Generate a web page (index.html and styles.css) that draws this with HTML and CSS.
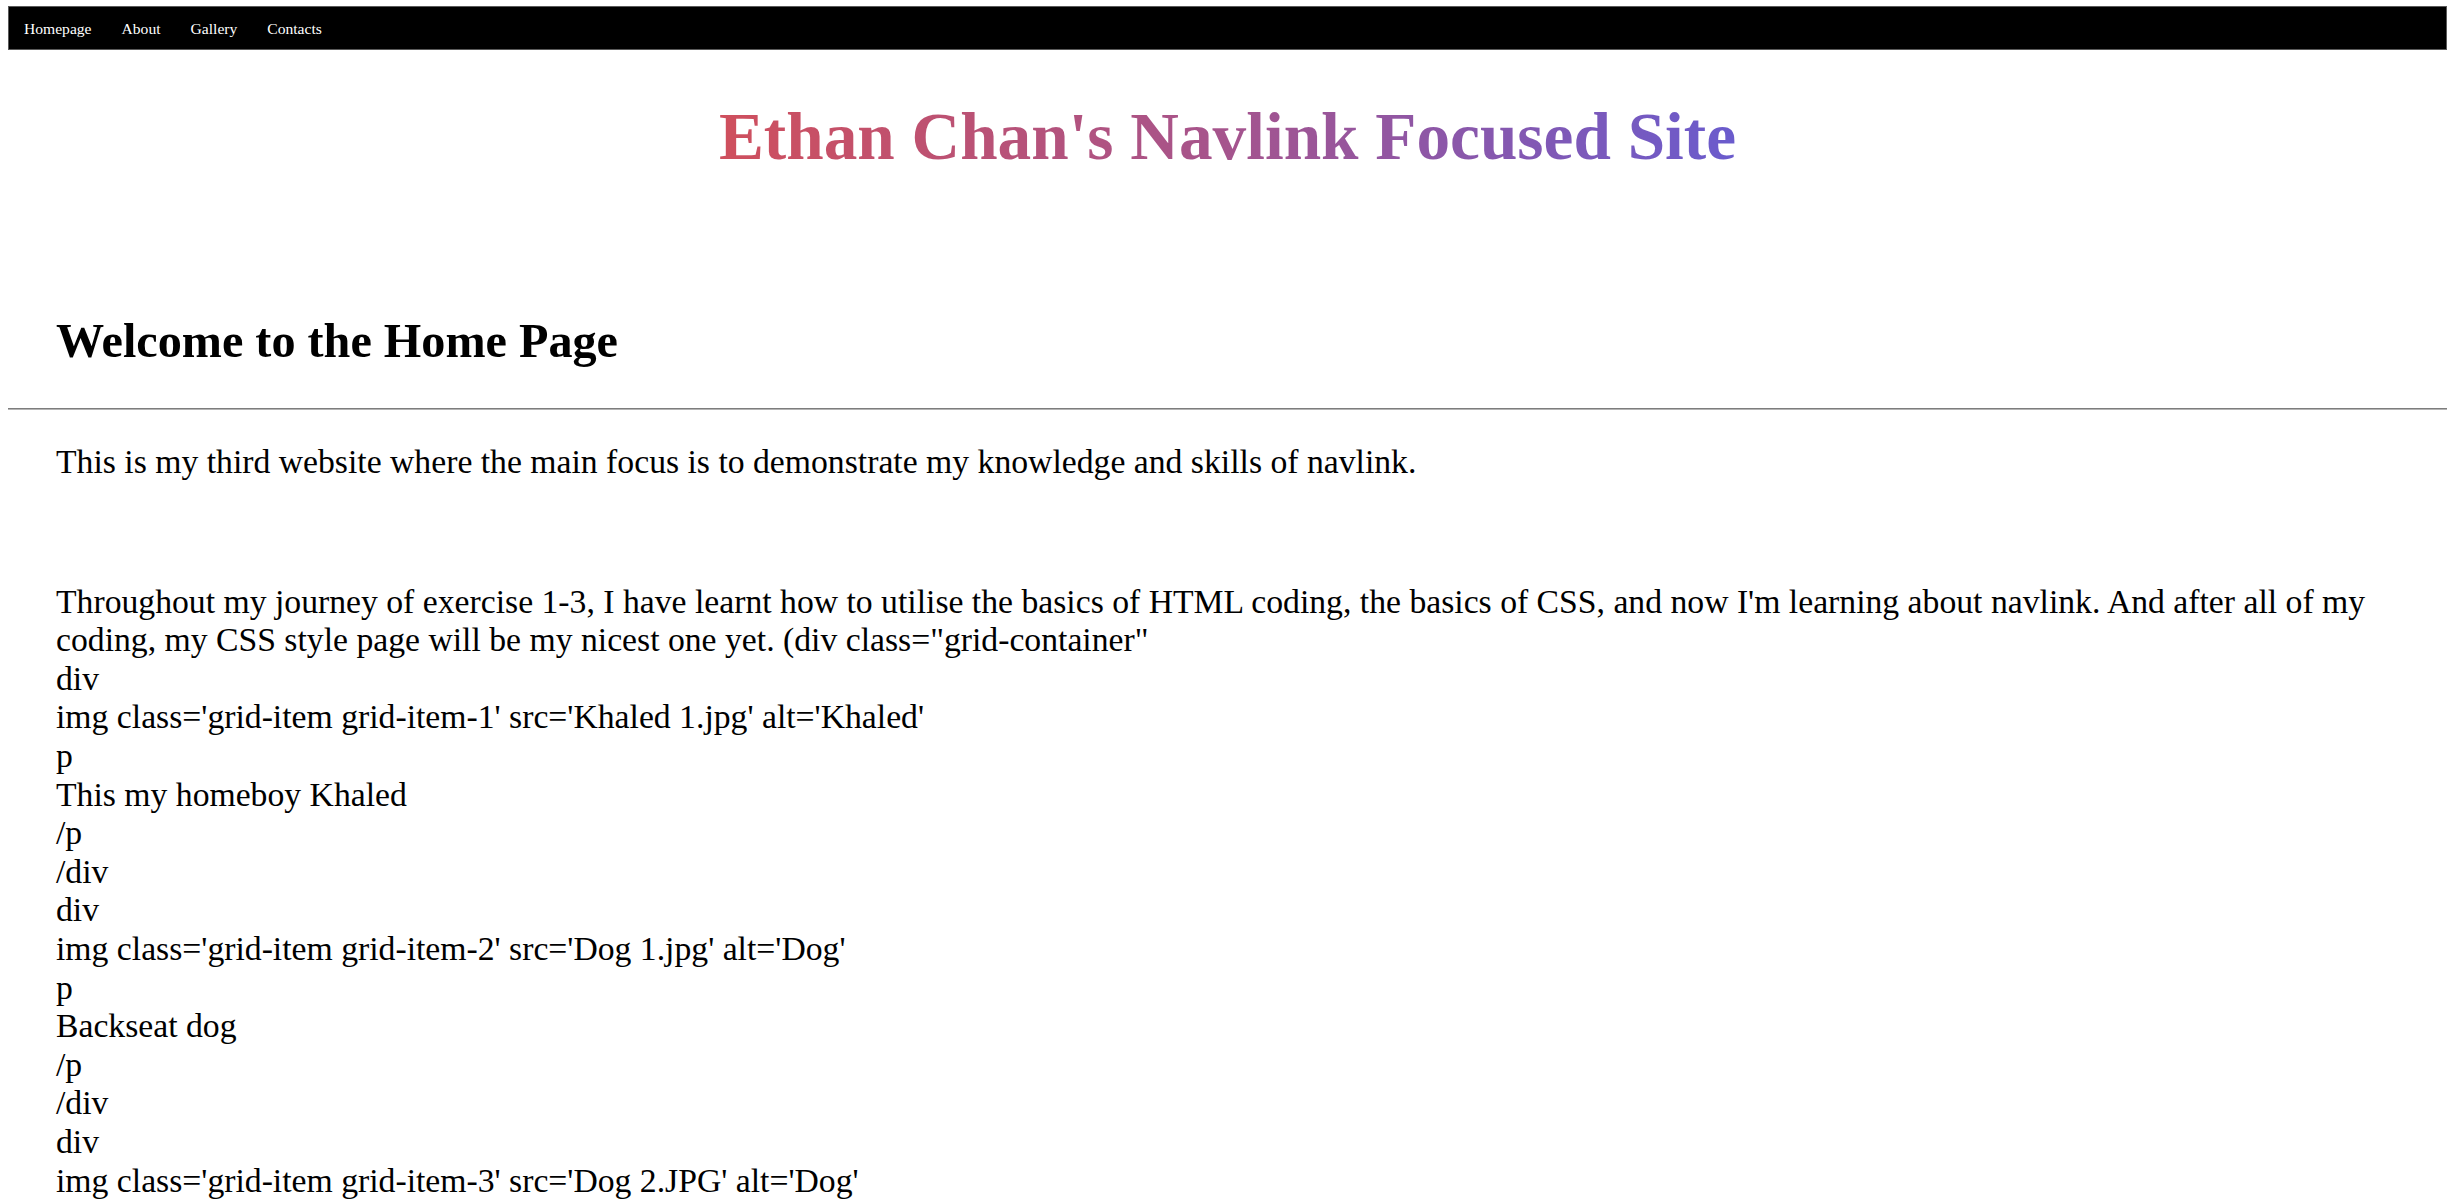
FILE: index.html
```html
<!DOCTYPE html>
<html lang="en">
<head>
<meta charset="utf-8">
<title>Ethan Chan's Navlink Focused Site</title>
<link rel="stylesheet" href="styles.css">
</head>
<body>
<nav class="topnav">
  <a class="navlink" href="#">Homepage</a>
  <a class="navlink" href="#">About</a>
  <a class="navlink" href="#">Gallery</a>
  <a class="navlink" href="#">Contacts</a>
</nav>
<header class="site-header">
  <h1 class="site-title">Ethan Chan's Navlink Focused Site</h1>
</header>
<section class="intro">
  <h2 class="page-heading">Welcome to the Home Page</h2>
</section>
<hr class="divider">
<main class="content">
  <p class="lead">This is my third website where the main focus is to demonstrate my knowledge and skills of navlink.</p>
  <p class="body-text">Throughout my journey of exercise 1-3, I have learnt how to utilise the basics of HTML coding, the basics of CSS, and now I'm learning about navlink. And after all of my coding, my CSS style page will be my nicest one yet. (div class="grid-container"
div
img class='grid-item grid-item-1' src='Khaled 1.jpg' alt='Khaled'
p
This my homeboy Khaled
/p
/div
div
img class='grid-item grid-item-2' src='Dog 1.jpg' alt='Dog'
p
Backseat dog
/p
/div
div
img class='grid-item grid-item-3' src='Dog 2.JPG' alt='Dog'</p>
</main>
</body>
</html>
```

FILE: styles.css
```css
html {
  background: #ffffff;
}

body {
  margin: 6px 8px 0 8px;
  font-family: "Liberation Serif", "Times New Roman", serif;
  color: #000000;
}

.topnav {
  display: flex;
  align-items: center;
  height: 44px;
  box-sizing: border-box;
  background: #000000;
  border: 1px solid #5a5a5a;
}

.navlink {
  color: #ffffff;
  text-decoration: none;
  font-size: 15.6px;
  padding: 0 15px;
  line-height: 1;
  margin-top: 1px;
}

.site-header {
  display: flex;
  justify-content: center;
}

.site-title {
  margin: 48px 0 0 0;
  font-size: 67.3px;
  font-weight: bold;
  line-height: 77px;
  background: linear-gradient(to right, #cf4f5d, #a5548d 50%, #6a5bcd);
  -webkit-background-clip: text;
  background-clip: text;
  color: transparent;
  -webkit-text-fill-color: transparent;
}

.intro {
  padding: 0 48px;
}

.page-heading {
  margin: 138px 0 40px 0;
  font-size: 48.2px;
  font-weight: bold;
  line-height: 55px;
}

.divider {
  margin: 0;
  height: 0;
  border: 0;
  border-top: 1px solid #7d7d7d;
  border-bottom: 1px solid #b4b4b4;
}

.content {
  padding: 0 48px;
}

.lead {
  margin: 33px 0 101px 0;
  font-size: 33.7px;
  line-height: 38.6px;
}

.body-text {
  margin: 0;
  font-size: 33.7px;
  line-height: 38.6px;
  white-space: pre-line;
}
```
